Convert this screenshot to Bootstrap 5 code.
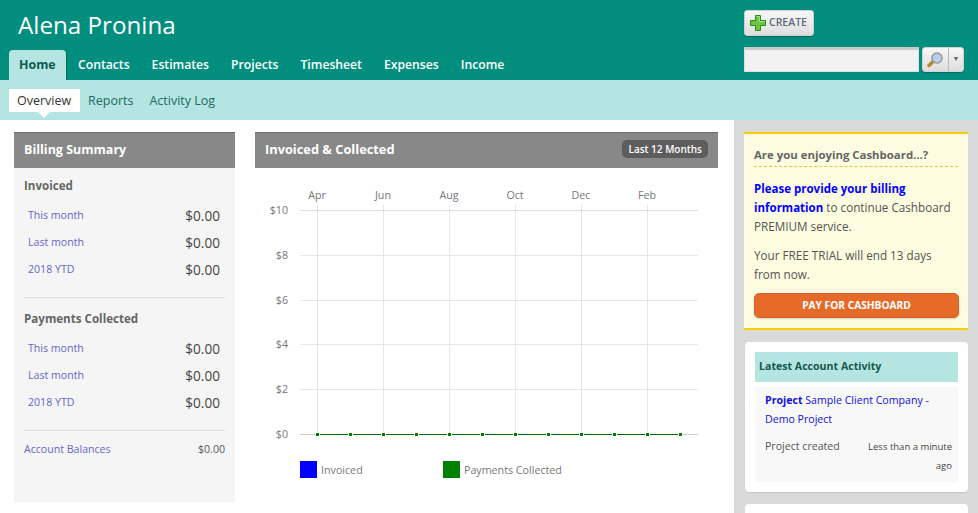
<!DOCTYPE html>
<html lang="en">
<head>
<meta charset="utf-8">
<title>Cashboard</title>
<link rel="stylesheet" href="https://cdn.jsdelivr.net/npm/bootstrap@5.3.0/dist/css/bootstrap.min.css">
<style>
html,body{height:513px;overflow:hidden}
body{font-family:"Open Sans","Noto Sans",sans-serif;font-size:12px;color:#555;background:#fff}
.top-bar{background:#028e7e;height:80px;padding-left:9px}
.brand-name{font-size:24.2px;line-height:34px;color:#fff;margin:8px 0 0 9px;font-weight:400}
.main-tabs{margin-top:8px;height:30px}
.main-tabs a{display:block;color:#fff;font-weight:600;font-size:12.2px;line-height:30px;padding:0 11px;text-decoration:none}
.main-tabs a.on{background:#b4e5e0;color:#0b5a55;font-weight:700;border-radius:4px 4px 0 0;padding:0 10px;margin-right:1px;width:57px;font-size:12.4px;box-shadow:1px 0 0 #07705f}
.top-tools{width:234px;margin-right:0;padding-top:10px}
.make-btn{width:70px;height:26px;background:linear-gradient(#f8f8f8,#dedede);border:1px solid #cfcfcf;border-radius:3px;color:#5d6b80;font-weight:600;font-size:10.5px;padding:0 0 0 5px;gap:3px;box-shadow:0 1px 1px rgba(0,0,0,.25)}
.search-row{margin-top:11px;height:25px}
.search-box{width:175px;height:25px;background:#f2f2f2;border:1px solid #ddd;border-top:3px solid #c9c9c9;border-radius:0;padding:0}
.search-btn{width:42px;height:25px;margin-left:3px;background:linear-gradient(#f6f6f6,#dedede);border:1px solid #d3d3d3;border-radius:3px;box-shadow:0 1px 1px rgba(0,0,0,.25)}
.search-go{width:26px;border-right:1px solid #bbb;height:100%}
.search-drop{flex:1;font-size:7px;color:#666}
.sub-bar{background:#b4e5e0;height:40px;padding:9px 0 0 9px}
.sub-bar a{display:block;height:23px;line-height:23px;font-size:12.5px;color:#1c6b63;padding:0 8px;text-decoration:none}
.sub-bar a.on{position:relative;background:#fff;color:#333;width:71px}
.sub-bar a.on::after{content:"";position:absolute;left:29px;top:23px;border:6px solid transparent;border-top-color:#fff;border-bottom:0}
.content-wrap{height:393px}
.summary-col{width:221px;margin:12px 0 0 14px;height:370px;background:#f5f5f5}
.chart-col{width:463px;margin:12px 0 0 20px}
.band{height:36px;background:#888;border-top:1px solid #6e6e6e;color:#fff;font-weight:700;font-size:12.5px;padding:0 10px;line-height:33px}
.chart-col .band{font-size:12.8px;padding-bottom:3px}
.period-tag{background:#5d5d5d;color:#fff;font-size:10px;font-weight:600;line-height:18px;border-radius:5px;padding:0 6px;margin-right:0}
.summary-body{padding:10px 10px 0}
.sum-title{font-size:11.6px;font-weight:700;color:#666;line-height:16px;margin-bottom:11px}
.sum-row{height:27px;padding-left:4px;padding-right:5px}
.sum-row a{color:#6666cc;font-size:10.6px;text-decoration:none;line-height:20px}
.sum-amt{font-size:13.6px;color:#444;line-height:22px}
.sum-rule{border-top:1px solid #ddd;margin:11px 0 13px}
.bal-row{font-size:10.6px;line-height:16px;margin-top:10px}
.bal-row a{color:#6666cc;text-decoration:none}
.side-col{width:244px;margin-left:16px;background:#dadada;padding:12px 10px 0;height:393px}
.promo-box{width:224px;height:198px;background:#fcfce0;border-top:2px solid #fc0;border-bottom:2px solid #fc0;padding:12px 10px 0;font-size:11.7px;line-height:19px;color:#555}
.promo-title{font-size:11.4px;font-weight:700;color:#666;line-height:18px;padding-bottom:2px;border-bottom:1px dashed #eec52c;margin-bottom:12px}
.promo-box p{margin:0 0 10px}
.promo-box p+p{margin-bottom:11px}
.promo-box a{color:#00f;font-size:11.5px;font-weight:700;text-decoration:none}
.pay-btn{width:205px;height:25px;background:#e66b2a;border:1px solid #d9622a;border-radius:5px;color:#fff;font-size:10.2px;font-weight:700;line-height:23px;padding:0;box-shadow:0 1px 2px rgba(0,0,0,.15);margin-top:-2px}
.feed-box{background:#fff;border-radius:4px;box-shadow:0 1px 1px rgba(0,0,0,.1);width:223px;margin:12px 0 0 1px;height:150px;padding:10px}
.feed-head{background:#b4e5e0;height:30px;line-height:28px;font-weight:700;font-size:10.6px;color:#14584f;padding-left:4px}
.feed-body{background:#f8f8f8;margin-top:5px;height:95px;padding:4px 6px 0 10px;font-size:10.6px;line-height:19px}
.feed-body a{color:#11d;text-decoration:none}
.feed-meta{margin-top:8px}
.feed-when{width:90px;text-align:right;font-size:9.5px;color:#444;line-height:19px;margin-left:auto}
.next-box{background:#fff;border-radius:4px;width:223px;height:30px;margin:12px 0 0 1px}
.chart-svg{display:block;margin-left:-255px}
.chart-svg text{font-family:"Open Sans","Noto Sans",sans-serif;font-size:10.7px;fill:#777}
</style>
</head>
<body>
<header class="top-bar d-flex justify-content-between">
  <div>
    <h1 class="brand-name">Alena Pronina</h1>
    <nav class="main-tabs d-flex">
      <a class="on" href="#">Home</a>
      <a href="#">Contacts</a>
      <a href="#">Estimates</a>
      <a href="#">Projects</a>
      <a href="#">Timesheet</a>
      <a href="#">Expenses</a>
      <a href="#">Income</a>
    </nav>
  </div>
  <div class="top-tools">
    <button class="btn make-btn d-flex align-items-center" type="button">
      <svg width="16" height="16" viewBox="0 0 16 16"><path d="M5.500.5h5v5h5v5h-5v5h-5v-5h-5v-5h5z" fill="#6cc644" stroke="#2a8a1c"/><path d="M6.500 1.500h3v5h5" fill="none" stroke="#a5e58a"/></svg>
      CREATE
    </button>
    <div class="search-row d-flex">
      <input class="search-box form-control" type="text" aria-label="Search">
      <div class="search-btn d-flex align-items-center">
        <div class="search-go d-flex align-items-center justify-content-center">
          <svg width="17" height="17" viewBox="0 0 17 17"><path d="M6 10.500 2 14.500" stroke="#b58a2a" stroke-width="3.500" stroke-linecap="round"/><circle cx="10" cy="7" r="5" fill="#b8cdf0" stroke="#9a9a9a" stroke-width="1.600"/></svg>
        </div>
        <div class="search-drop text-center">▼</div>
      </div>
    </div>
  </div>
</header>
<nav class="sub-bar d-flex">
  <a class="on" href="#">Overview</a>
  <a href="#">Reports</a>
  <a href="#">Activity Log</a>
</nav>
<div class="content-wrap d-flex">
  <section class="summary-col flex-shrink-0">
    <div class="band">Billing Summary</div>
    <div class="summary-body">
      <div class="sum-title">Invoiced</div>
      <div class="sum-row d-flex justify-content-between"><a href="#">This month</a><span class="sum-amt">$0.00</span></div>
      <div class="sum-row d-flex justify-content-between"><a href="#">Last month</a><span class="sum-amt">$0.00</span></div>
      <div class="sum-row d-flex justify-content-between"><a href="#">2018 YTD</a><span class="sum-amt">$0.00</span></div>
      <div class="sum-rule"></div>
      <div class="sum-title">Payments Collected</div>
      <div class="sum-row d-flex justify-content-between"><a href="#">This month</a><span class="sum-amt">$0.00</span></div>
      <div class="sum-row d-flex justify-content-between"><a href="#">Last month</a><span class="sum-amt">$0.00</span></div>
      <div class="sum-row d-flex justify-content-between"><a href="#">2018 YTD</a><span class="sum-amt">$0.00</span></div>
      <div class="sum-rule mb-0"></div>
      <div class="bal-row d-flex justify-content-between"><a href="#">Account Balances</a><span>$0.00</span></div>
    </div>
  </section>
  <section class="chart-col flex-shrink-0">
    <div class="band d-flex justify-content-between align-items-center"><span>Invoiced &amp; Collected</span><span class="period-tag">Last 12 Months</span></div>
    <svg class="chart-svg" width="718" height="345" viewBox="0 168 718 345" role="img">
      <g stroke="#e6e6e6" fill="none">
        <path d="M300 255.500H698M300 300.500H698M300 344.500H698M300 389.500H698"/>
        <path d="M317.500 205V434M383.500 205V434M449.500 205V434M515.500 205V434M581.500 205V434M647.500 205V434"/>
      </g>
      <path d="M300 210.500H698" stroke="#ddd"/>
      <path d="M300 434.500H315M683 434.500H698" stroke="#ccc"/>
      <g text-anchor="middle">
        <text x="317" y="199">Apr</text><text x="383" y="199">Jun</text><text x="449" y="199">Aug</text>
        <text x="515" y="199">Oct</text><text x="581" y="199">Dec</text><text x="647" y="199">Feb</text>
      </g>
      <g text-anchor="end">
        <text x="288" y="214">$10</text><text x="288" y="259">$8</text><text x="288" y="304">$6</text>
        <text x="288" y="348">$4</text><text x="288" y="393">$2</text><text x="288" y="438">$0</text>
      </g>
      <path d="M320 434.500H680" stroke="#006e00" stroke-dasharray="28 5"/>
      <g fill="#007a00">
        <rect x="316" y="433" width="3" height="3"/><rect x="349" y="433" width="3" height="3"/>
        <rect x="382" y="433" width="3" height="3"/><rect x="415" y="433" width="3" height="3"/>
        <rect x="448" y="433" width="3" height="3"/><rect x="481" y="433" width="3" height="3"/>
        <rect x="514" y="433" width="3" height="3"/><rect x="547" y="433" width="3" height="3"/>
        <rect x="580" y="433" width="3" height="3"/><rect x="613" y="433" width="3" height="3"/>
        <rect x="646" y="433" width="3" height="3"/><rect x="679" y="433" width="3" height="3"/>
      </g>
      <rect x="300" y="461" width="17" height="17" fill="#00f"/>
      <text x="321" y="474">Invoiced</text>
      <rect x="443" y="461" width="17" height="17" fill="#008000"/>
      <text x="464" y="474">Payments Collected</text>
    </svg>
  </section>
  <aside class="side-col flex-shrink-0">
    <div class="promo-box">
      <div class="promo-title">Are you enjoying Cashboard...?</div>
      <p><a href="#">Please provide your billing information</a> to continue Cashboard PREMIUM service.</p>
      <p>Your FREE TRIAL will end 13 days from now.</p>
      <button class="btn pay-btn d-block" type="button">PAY FOR CASHBOARD</button>
    </div>
    <div class="feed-box">
      <div class="feed-head">Latest Account Activity</div>
      <div class="feed-body">
        <a href="#"><strong>Project</strong> Sample Client Company - Demo Project</a>
        <div class="feed-meta d-flex"><span>Project created</span><span class="feed-when">Less than a minute ago</span></div>
      </div>
    </div>
    <div class="next-box"></div>
  </aside>
</div>
</body>
</html>
